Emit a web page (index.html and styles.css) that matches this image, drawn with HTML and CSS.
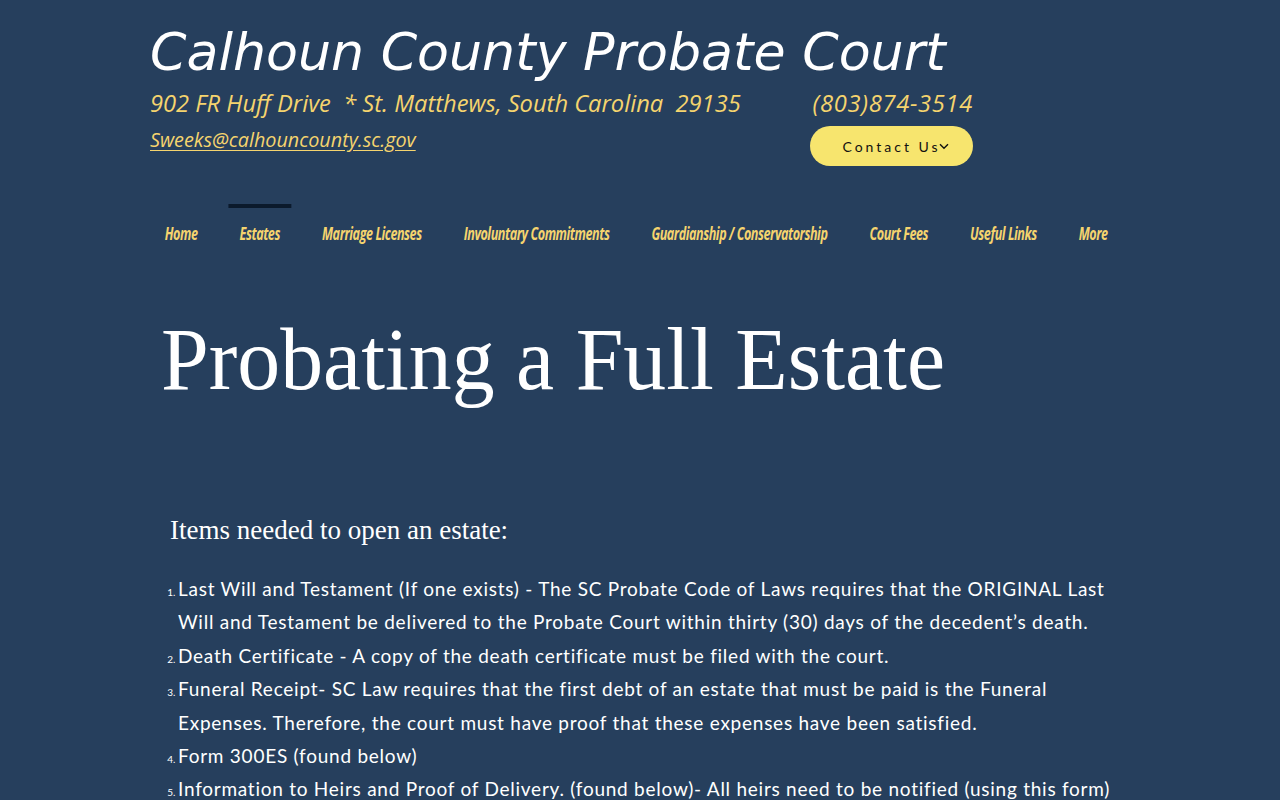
FILE: index.html
```html
<!DOCTYPE html>
<html lang="en">
<head>
<meta charset="utf-8">
<title>Calhoun County Probate Court - Estates</title>
<link rel="stylesheet" href="styles.css">
</head>
<body>
<div class="page">
  <header class="header">
    <h1 class="site-title">Calhoun County Probate Court</h1>
    <div class="info-row">
      <div class="info-left">
        <p class="address">902 FR Huff Drive&nbsp; * St. Matthews, South Carolina&nbsp; 29135</p>
        <a class="email" href="#">Sweeks@calhouncounty.sc.gov</a>
      </div>
      <div class="info-right">
        <p class="phone">(803)874-3514</p>
        <button class="contact">Contact Us<svg class="chev" width="10" height="7" viewBox="0 0 10 7"><path d="M1 1.2 L5 5.2 L9 1.2" fill="none" stroke="#111" stroke-width="1.4"/></svg></button>
      </div>
    </div>
  </header>
  <nav class="nav">
    <a href="#" class="nav-item">Home</a>
    <a href="#" class="nav-item active">Estates</a>
    <a href="#" class="nav-item">Marriage Licenses</a>
    <a href="#" class="nav-item">Involuntary Commitments</a>
    <a href="#" class="nav-item">Guardianship / Conservatorship</a>
    <a href="#" class="nav-item">Court Fees</a>
    <a href="#" class="nav-item">Useful Links</a>
    <a href="#" class="nav-item">More</a>
  </nav>
  <main class="content">
    <h2 class="page-title"><span>Probating a Full Estate</span></h2>
    <h3 class="subtitle">Items needed to open an estate:</h3>
    <ol class="items">
      <li>Last Will and Testament (If one exists) - The SC Probate Code of Laws requires that the ORIGINAL Last Will and Testament be delivered to the Probate Court within thirty (30) days of the decedent’s death.</li>
      <li>Death Certificate - A copy of the death certificate must be filed with the court.</li>
      <li>Funeral Receipt- SC Law requires that the first debt of an estate that must be paid is the Funeral Expenses. Therefore, the court must have proof that these expenses have been satisfied.</li>
      <li>Form 300ES (found below)</li>
      <li>Information to Heirs and Proof of Delivery. (found below)- All heirs need to be notified (using this form)</li>
    </ol>
  </main>
</div>
</body>
</html>
```

FILE: styles.css
```css
html, body {
  margin: 0;
  padding: 0;
  background: #263f5d;
  overflow: hidden;
}
body {
  font-family: "Open Sans", sans-serif;
  color: #fff;
}
.page {
  width: 980px;
  margin: 0 auto;
}
.header {
  padding-top: 21px;
}
.site-title {
  margin: 0;
  font-family: "DejaVu Sans", Verdana, sans-serif;
  font-style: oblique;
  font-weight: normal;
  font-size: 52.2px;
  line-height: 62px;
  letter-spacing: 0;
  color: #fff;
}
.info-row {
  display: flex;
  justify-content: space-between;
  width: 823px;
  margin-top: 4px;
}
.info-left, .info-right {
  display: flex;
  flex-direction: column;
}
.info-right {
  align-items: flex-end;
}
.address, .phone {
  margin: 0;
  font-family: "Open Sans", sans-serif;
  font-style: italic;
  font-weight: 400;
  font-size: 23.7px;
  line-height: 32px;
  color: #f5d46e;
}
.phone {
  letter-spacing: 0.7px;
}
.email {
  margin-top: 8px;
  font-family: "Open Sans", sans-serif;
  font-style: italic;
  font-weight: 400;
  font-size: 19.8px;
  line-height: 26px;
  color: #f5d46e;
  text-decoration: underline;
  text-underline-offset: 3px;
}
.contact {
  margin-top: 7px;
  width: 163px;
  height: 40px;
  border: 0;
  border-radius: 20px;
  background: #f7e56e;
  color: #111;
  font-family: "Lato", sans-serif;
  font-size: 14px;
  letter-spacing: 3px;
  display: flex;
  align-items: center;
  justify-content: center;
  padding: 0 0 0 8px;
}
.chev {
  margin-left: -2px;
}
.nav {
  display: flex;
  gap: 27px;
  margin-top: 38px;
  padding-left: 5px;
  transform: scaleX(0.74);
  transform-origin: left top;
  width: 1400px;
}
.nav-item {
  display: block;
  white-space: nowrap;
  padding: 15px 14.9px 0;
  border-top: 4px solid transparent;
  font-family: "Open Sans", sans-serif;
  font-weight: 700;
  font-style: italic;
  font-size: 17px;
  line-height: 22px;
  letter-spacing: -0.6px;
  color: #f5d46e;
  text-decoration: none;
}
.nav-item.active {
  border-top-color: #0b1a2c;
}
.content {
  padding-top: 60px;
}
.page-title {
  margin: 0;
  padding-left: 11px;
  font-family: "Liberation Serif", serif;
  font-weight: normal;
  font-size: 88px;
  line-height: 110px;
  color: #fff;
}
.page-title span {
  display: inline-block;
  transform: scaleX(0.975);
  transform-origin: left center;
}
.subtitle {
  margin: 97px 0 0;
  padding-left: 20px;
  font-family: "Liberation Serif", serif;
  font-weight: normal;
  font-size: 27px;
  line-height: 36px;
  color: #fff;
}
.items {
  margin: 24px 0 0;
  padding-left: 28px;
  font-family: "Lato", sans-serif;
  font-size: 19px;
  line-height: 33.4px;
  letter-spacing: 0.75px;
  color: #fff;
}
.items li::marker {
  font-size: 10px;
  letter-spacing: 0;
}
```
